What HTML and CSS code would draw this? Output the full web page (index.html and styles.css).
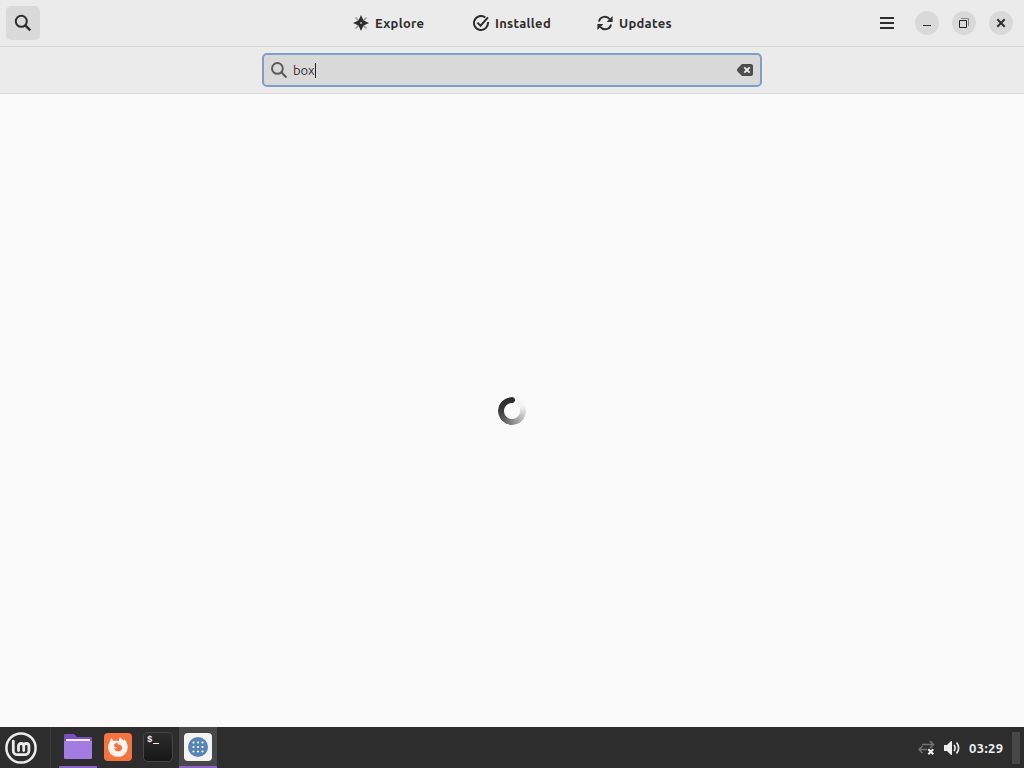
FILE: index.html
```
<!doctype html>
<html lang="en">
	<head>
		<title>Software</title>
		<meta charset="utf-8" />
		<link rel="stylesheet" href="styles.css">
	</head>

	<body>
		<header class="header">
			<button class="search-toggle" aria-label="Search">
				<svg width="18" height="18" viewBox="0 0 18 18" fill="none" stroke="#2e2e2e"><circle cx="7.3" cy="7.3" r="5.5" stroke-width="2"/><path d="M11.3 11.3l5 5" stroke-width="2.4"/></svg>
			</button>
			<nav class="tabs">
				<a class="tab">
					<svg width="16" height="16" viewBox="0 0 16 16"><path d="M2.5 2.5l11 11M13.5 2.5l-11 11" stroke="#aaa" stroke-width="1.8"/><path fill="#2e2e2e" fill-rule="evenodd" d="M8 0l2.5 5.5L16 8l-5.5 2.5L8 16l-2.5-5.5L0 8l5.5-2.5zM8 6.9a1.1 1.1 0 100 2.2 1.1 1.1 0 000-2.2z"/></svg>
					<span class="label">Explore</span>
				</a>
				<a class="tab">
					<svg width="16" height="16" viewBox="0 0 16 16" fill="none" stroke="#2e2e2e" stroke-width="2"><path d="M12.3 2.5A7 7 0 1 0 14.9 7"/><path d="M4.4 7.6l3.1 3.1 7.5-8.3"/></svg>
					<span class="label">Installed</span>
				</a>
				<a class="tab">
					<svg width="16" height="16" viewBox="0 0 16 16"><path d="M2 6.5C3.2 1.2 9.5.2 12.7 4.2M14 9.5C12.8 14.8 6.5 15.8 3.3 11.8" fill="none" stroke="#2e2e2e" stroke-width="2"/><path d="M15.6 1v6H9.7zM.4 15V9h5.9z" fill="#2e2e2e"/></svg>
					<span class="label">Updates</span>
				</a>
			</nav>
			<div class="controls">
				<svg class="menu" width="14" height="12" viewBox="0 0 14 12"><path d="M0 1h14M0 6h14M0 11h14" stroke="#2e2e2e" stroke-width="2"/></svg>
				<span class="circle"><svg width="24" height="24" viewBox="0 0 24 24"><path d="M8 14.5h8" stroke="#2e2e2e"/></svg></span>
				<span class="circle"><svg width="24" height="24" viewBox="0 0 24 24" fill="none"><path d="M9 7.5h7.5V15" stroke="#888"/><path d="M7.5 9.5h7v7h-7z" stroke="#222"/></svg></span>
				<span class="circle"><svg width="24" height="24" viewBox="0 0 24 24"><path d="M8.3 8.3l7.4 7.4M15.7 8.3l-7.4 7.4" stroke="#2e2e2e" stroke-width="2"/></svg></span>
			</div>
		</header>

		<div class="searchbar">
			<div class="entry">
				<svg width="16" height="16" viewBox="0 0 16 16" fill="none" stroke="#5a5a5a"><circle cx="6.4" cy="6.4" r="5.4" stroke-width="1.9"/><path d="M10.3 10.3l5.2 5.2" stroke-width="2.1"/></svg>
				<span class="query">box</span><span class="caret"></span>
				<svg class="clear" width="16" height="12" viewBox="0 0 16 12"><path d="M5 0h9a2 2 0 012 2v8a2 2 0 01-2 2H5L1 8Q-1 6 1 4z" fill="#4d4d4d"/><path d="M7.3 3.3l5.4 5.4M12.7 3.3L7.3 8.7" stroke="#eee" stroke-width="1.9"/></svg>
			</div>
		</div>

		<main class="content"><div class="spinner"></div></main>

		<footer class="panel">
			<div class="start">
				<svg width="32" height="32" viewBox="0 0 32 32" fill="none" stroke="#ececec" stroke-linecap="round" stroke-linejoin="round"><circle cx="16" cy="16" r="14.6" stroke-width="2.5"/><path d="M8.3 9.2v9.5a4 4 0 004 4h7.6a4 4 0 004-4v-4.6a2.6 2.6 0 00-5.2 0v4.5M18.7 14.1a2.6 2.6 0 00-5.2 0v4.5" stroke-width="2.8"/></svg>
			</div>
			<div class="task open">
				<svg width="28" height="28" viewBox="0 0 28 28"><path d="M0 2q0-1 1-1h8q1 0 2 1l2 2h14q1 0 1 1v8H0z" fill="#7b4fc0"/><path d="M2 6h24v5H2z" fill="#f1eafb"/><path d="M0 8h28v17q0 1-1 1H1q-1 0-1-1z" fill="#a27ce0"/></svg>
			</div>
			<div class="task">
				<svg width="28" height="28" viewBox="0 0 28 28"><rect width="28" height="28" rx="4" fill="#f47340"/><path d="M7.2 5l2.4 3q3.3-1.2 5.6.2-.9-2.2.7-4.2 1.6 2.4 4 3.6l.6-1.4q3.4 3.8 3.2 8.4-.7 8.9-9.7 9.4-9.4-.5-10-9.4 0-3.5 1.9-6z" fill="#fff5ee"/><path d="M10.2 11.5q1.4-1.7 3.2-2-.3 1.5 1 2l3.2 1.2q1.8 4.4-2.4 5.6-4.3.4-5.2-3.3 1.6 1.1 3.2-.3-1.8.1-3-.6z" fill="#f47340"/></svg>
			</div>
			<div class="task">
				<div class="terminal">$<span class="cursor"></span></div>
			</div>
			<div class="task open active">
				<svg width="28" height="28" viewBox="0 0 28 28"><rect width="28" height="28" rx="4" fill="#f3f3f3"/><circle cx="14" cy="14" r="10" fill="#5584b5"/><path d="M9.5 9.5h9.1M9.5 14h9.1M9.5 18.5h9.1" stroke="#fff" stroke-width="2.2" stroke-linecap="round" stroke-dasharray="0 4.5"/></svg>
			</div>
			<div class="tray">
				<svg width="17" height="16" viewBox="0 0 17 16" fill="none"><path d="M4 4.5h11M12 1l3.5 3.5L12 8M9 9.5H1M4.5 6L1 9.5 4.5 13" stroke="#737373" stroke-width="1.5"/><path d="M10.3 9.2l5 5M15.3 9.2l-5 5" stroke="#eee" stroke-width="2"/></svg>
				<svg class="volume" width="17" height="16" viewBox="0 0 17 16"><path d="M0 5h3l4-4h1v14H7l-4-4H0z" fill="#eee"/><path d="M10 5q2.2 3 0 6M12.5 2.5q4.3 5.5 0 11" fill="none" stroke="#e4e4e4" stroke-width="1.7"/></svg>
				<span class="clock">03:29</span>
				<span class="corner"></span>
			</div>
		</footer>
	</body>
</html>
```
FILE: styles.css
```
*{
	box-sizing:border-box;
}
body{
	margin:0;
	height:768px;
	display:flex;
	flex-direction:column;
	overflow:hidden;
	background:#fafafa;
	color:#2e2e2e;
	font:13px "Ubuntu","Noto Sans",sans-serif;
}
svg{
	display:block;
	flex:none;
}

/* header */
.header{
	height:47px;
	display:grid;
	grid-template-columns:353px 1fr 144px;
	align-items:center;
	background:#ebebeb;
	border-bottom:1px solid #d6d6d6;
}
.search-toggle{
	width:34px;
	height:34px;
	margin-left:6px;
	padding:0;
	display:flex;
	align-items:center;
	justify-content:center;
	border:0;
	border-radius:5px;
	background:#dadada;
}
.tabs{
	display:grid;
	grid-template-columns:120px 124px 80px;
}
.tab{
	display:flex;
	align-items:center;
	gap:6px;
	font-weight:bold;
	line-height:18px;
}
.label{
	padding-bottom:1px;
	letter-spacing:.3px;
}
.controls{
	display:flex;
	align-items:center;
}
.menu{
	margin-right:21px;
}
.circle{
	width:24px;
	height:24px;
	margin-right:13px;
	flex:none;
	border-radius:50%;
	background:#d9d9d9;
}

/* search */
.searchbar{
	height:47px;
	padding-top:6px;
	background:#ebebeb;
	border-bottom:1px solid #dadada;
}
.entry{
	width:500px;
	height:34px;
	margin:0 auto;
	padding:0 7px;
	display:flex;
	align-items:center;
	border:2px solid #7e9fc8;
	border-radius:5px;
	background:#d9d9d9;
}
.query{
	margin-left:6px;
	padding-bottom:1px;
}
.caret{
	width:1px;
	height:15px;
	background:#222;
}
.clear{
	margin-left:auto;
}

.content{
	flex:1;
	display:flex;
	align-items:center;
	justify-content:center;
}
.spinner{
	width:28px;
	height:28px;
	border-radius:50%;
	/* second layer rounds off the dark end of the ring */
	background:
		radial-gradient(circle at 14px 3px,#2b2b2b 2.6px,transparent 3.2px),
		conic-gradient(#fafafa 0,#f3f3f3 18%,#ccc 30%,#999 45%,#555 65%,#333 80%,#2b2b2b 100%);
	-webkit-mask:radial-gradient(circle,transparent 7.5px,#000 8.5px);
	mask:radial-gradient(circle,transparent 7.5px,#000 8.5px);
}

/* bottom panel */
.panel{
	height:41px;
	display:flex;
	background:#2d2d2d;
}
.start{
	width:51px;
	margin-right:8px;
	padding:5px 0 0 5px;
	border-right:1px solid #3c3c3c;
}
.task{
	width:38px;
	margin-right:2px;
	padding-top:6px;
	display:flex;
	justify-content:center;
	align-items:flex-start;
}
.open{
	border-bottom:2px solid #8b62c9;
}
.active{
	background:#484848;
}
.terminal{
	width:30px;
	height:30px;
	margin-top:-1px;
	padding:2px 3px;
	display:flex;
	gap:1px;
	border:1px solid #464646;
	border-radius:5px;
	background:linear-gradient(#2c2c2c,#171717);
	color:#eee;
	font:bold 9px/11px "Liberation Mono",monospace;
}
.cursor{
	width:6px;
	height:9px;
	border-bottom:1px solid #eee;
}
.tray{
	margin-left:auto;
	display:flex;
	align-items:center;
	color:#eee;
}
.volume{
	margin-left:9px;
}
.clock{
	width:43px;
	margin-left:8px;
	font-weight:bold;
	letter-spacing:.4px;
}
.corner{
	width:8px;
	height:32px;
	margin-right:4px;
	background:#484848;
}
```
